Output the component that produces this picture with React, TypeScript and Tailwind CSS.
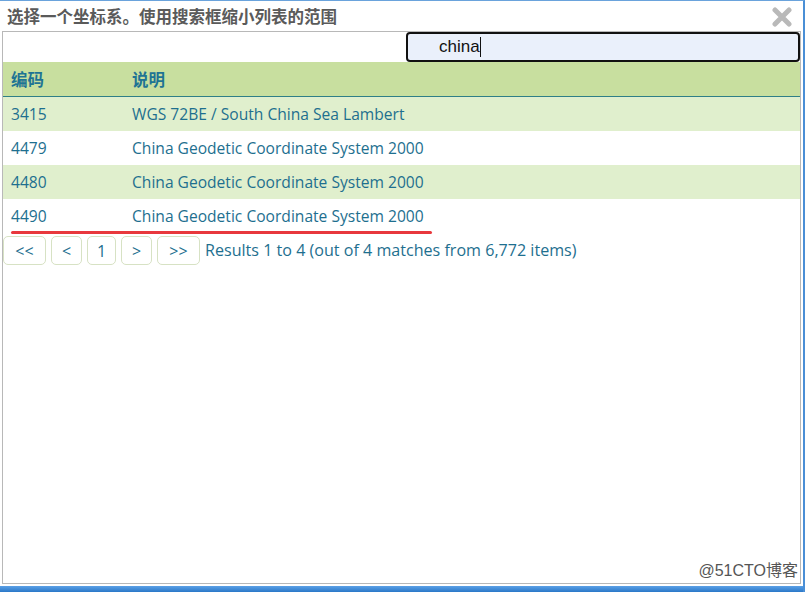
import React from "react";

const rows = [
  { code: "3415", desc: "WGS 72BE / South China Sea Lambert" },
  { code: "4479", desc: "China Geodetic Coordinate System 2000" },
  { code: "4480", desc: "China Geodetic Coordinate System 2000" },
  { code: "4490", desc: "China Geodetic Coordinate System 2000" },
];

const font = { fontFamily: '"Open Sans", "Noto Sans CJK SC", sans-serif' };

const buttons = [
  { t: "<<", w: "w-[43px]" },
  { t: "<", w: "w-[31px]" },
  { t: "1", w: "w-[29px]" },
  { t: ">", w: "w-[31px]" },
  { t: ">>", w: "w-[43px]" },
];

export default function App() {
  return (
    <div
      className="relative w-[805px] h-[592px] bg-white overflow-hidden flex flex-col border-t border-[#6aa3dc] border-r-[2px] border-r-[#4a8fd6]"
      style={font}
    >
      <div className="h-[30px] flex items-center justify-between pl-[7px] pr-[10px] shrink-0">
        <span className="text-[16.5px] font-bold text-[#5a5a5a]" style={{ fontFamily: '"Noto Sans CJK SC", sans-serif' }}>
          选择一个坐标系。使用搜索框缩小列表的范围
        </span>
        <svg width="22" height="20" viewBox="0 0 22 20" className="mt-[2px]">
          <path d="M4 3 L18 17 M18 3 L4 17" stroke="#b9b9b9" strokeWidth="5" strokeLinecap="round" />
        </svg>
      </div>
      <div className="mx-[2px] h-[553px] border border-[#b8b8b8] flex flex-col shrink-0">
        <div className="h-[30px] flex justify-end shrink-0">
          <div className="w-[394px] h-[30px] bg-[#eaf0fb] border-2 border-[#111] rounded-[4px] flex items-center pl-[31px]">
            <span className="text-[17px] text-[#111]" style={{ fontFamily: '"Liberation Sans", Arial, sans-serif' }}>china</span>
            <span className="w-[1px] h-[20px] bg-[#111]" />
          </div>
        </div>
        <div className="h-[35px] bg-[#c8df9f] border-b border-[#2f7f86] flex items-center text-[16.5px] font-bold text-[#1f7494] shrink-0" style={{ fontFamily: '"Noto Sans CJK SC", sans-serif' }}>
          <div className="w-[129px] pl-[8px]">编码</div>
          <div>说明</div>
        </div>
        {rows.map((r, i) => (
          <div
            key={r.code}
            className={`h-[34px] flex items-center pt-[2px] text-[15.6px] text-[#1e6f8f] shrink-0 ${i % 2 === 0 ? "bg-[#e0efcd]" : "bg-white"}`}
          >
            <div className="w-[129px] pl-[8px]">{r.code}</div>
            <div>{r.desc}</div>
          </div>
        ))}
        <div className="relative h-0">
          <div className="absolute left-[8px] top-[-2px] w-[421px] h-[3px] bg-[#e8383d] rounded-full" />
        </div>
        <div className="flex items-center gap-[5px] pt-[3px] text-[16px] text-[#1e6f8f]">
          {buttons.map((b) => (
            <div
              key={b.t}
              className={`h-[29px] flex items-center justify-center border border-[#d7e2c4] rounded-[5px] bg-white ${b.w}`}
            >
              {b.t}
            </div>
          ))}
          <span className="text-[16.1px]">Results 1 to 4 (out of 4 matches from 6,772 items)</span>
        </div>
        <div className="flex-1" />
        <div className="flex justify-end pr-[2px]">
          <span className="text-[16px] text-[#555]" style={{ fontFamily: '"Liberation Sans", "Noto Sans CJK SC", sans-serif' }}>@51CTO博客</span>
        </div>
      </div>
      <div className="flex-1" />
      <div className="h-[6px] bg-gradient-to-b from-[#5aa0e6] to-[#2a78c8] shrink-0" />
    </div>
  );
}
